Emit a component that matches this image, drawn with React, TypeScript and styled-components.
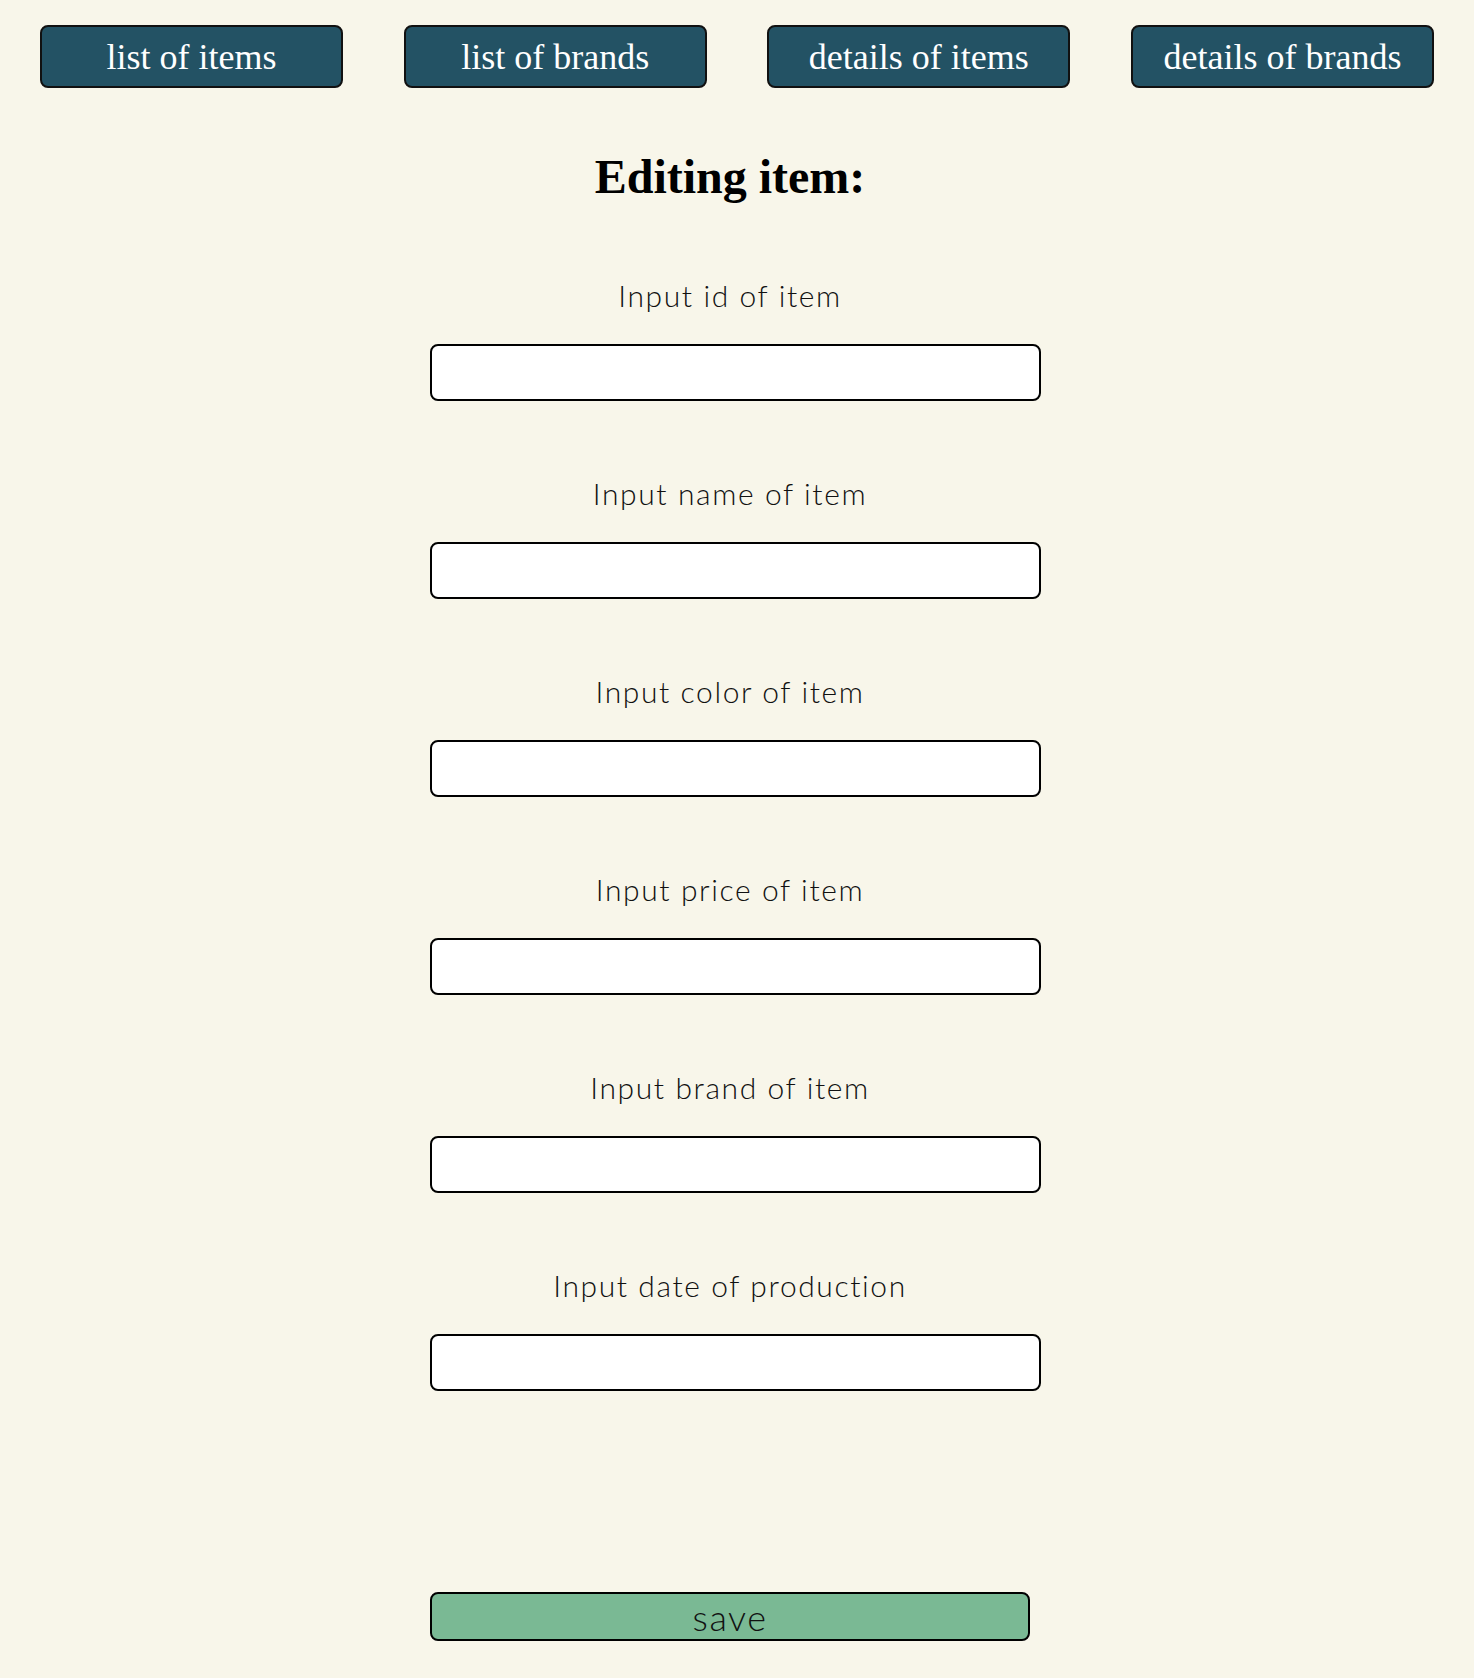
import React from "react";
import styled, { createGlobalStyle } from "styled-components";

const GlobalStyle = createGlobalStyle`
  html, body {
    margin: 0;
    padding: 0;
    background: #f8f6ea;
  }
  body {
    font-family: "Liberation Serif", "Times New Roman", serif;
    min-height: 1678px;
  }
`;

const Page = styled.div`
  display: flex;
  flex-direction: column;
  padding-bottom: 37px;
`;

const Nav = styled.nav`
  display: flex;
  justify-content: space-between;
  padding: 25px 40px 0;
`;

const NavButton = styled.button`
  width: 303px;
  height: 63px;
  box-sizing: border-box;
  background: #235264;
  color: #ffffff;
  border: 2px solid #111;
  border-radius: 8px;
  font-family: "Liberation Serif", "Times New Roman", serif;
  font-size: 36px;
  padding: 0;
  cursor: pointer;
`;

const Main = styled.main`
  display: flex;
  flex-direction: column;
  align-items: center;
  padding-right: 14px;
`;

const Heading = styled.h1`
  margin: 61px 0 0;
  font-family: "Liberation Serif", "Times New Roman", serif;
  font-weight: 700;
  font-size: 48px;
  line-height: 56px;
  color: #000;
  text-align: center;
`;

const Form = styled.form`
  width: 600px;
  display: flex;
  flex-direction: column;
  gap: 72px;
  margin-top: 70px;
`;

const Field = styled.div`
  display: flex;
  flex-direction: column;
  gap: 29px;
`;

const Label = styled.label`
  display: block;
  text-align: center;
  font-family: Lato, "Open Sans", sans-serif;
  font-weight: 300;
  font-size: 30px;
  letter-spacing: 1.6px;
  line-height: 40px;
  color: #111;
`;

const Input = styled.input`
  width: 611px;
  height: 57px;
  box-sizing: border-box;
  background: #ffffff;
  border: 2px solid #000;
  border-radius: 8px;
  padding: 0 8px;
  font-size: 24px;
  outline: none;
`;

const SaveButton = styled.button`
  width: 600px;
  height: 49px;
  box-sizing: border-box;
  margin-top: 129px;
  background: #7ab994;
  border: 2px solid #000;
  border-radius: 8px;
  padding: 0;
  font-family: Lato, "Open Sans", sans-serif;
  font-weight: 300;
  font-size: 36px;
  letter-spacing: 1.5px;
  line-height: 47px;
  color: #111;
  cursor: pointer;
`;

const navItems = ["list of items", "list of brands", "details of items", "details of brands"];

const fields = [
  { id: "id", label: "Input id of item" },
  { id: "name", label: "Input name of item" },
  { id: "color", label: "Input color of item" },
  { id: "price", label: "Input price of item" },
  { id: "brand", label: "Input brand of item" },
  { id: "date", label: "Input date of production" },
];

export default function App() {
  return (
    <>
      <GlobalStyle />
      <Page>
        <Nav>
          {navItems.map((item) => (
            <NavButton key={item} type="button">
              {item}
            </NavButton>
          ))}
        </Nav>
        <Main>
          <Heading>Editing item:</Heading>
          <Form onSubmit={(e) => e.preventDefault()}>
            {fields.map((f) => (
              <Field key={f.id}>
                <Label htmlFor={f.id}>{f.label}</Label>
                <Input id={f.id} type="text" />
              </Field>
            ))}
            <SaveButton type="submit">save</SaveButton>
          </Form>
        </Main>
      </Page>
    </>
  );
}
